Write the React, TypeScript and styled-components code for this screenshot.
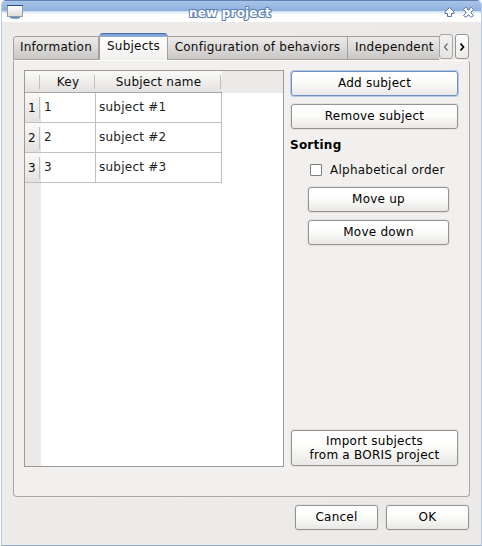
import React from 'react';
import styled, { createGlobalStyle } from 'styled-components';

const GlobalStyle = createGlobalStyle`
  * { box-sizing: border-box; }
  body {
    margin: 0;
    background: #fff;
    overflow: hidden;
    font: 12px/14px "DejaVu Sans", sans-serif;
    letter-spacing: 0.24px;
    color: #0c0c0c;
  }
`;

const Window = styled.div`
  width: 481px;
  height: 546px;
  margin-left: 1px;
  display: flex;
  flex-direction: column;
  border: solid #b9cbe6;
  border-width: 0 1px 1px;
  border-bottom-color: #94a6c8;
  border-radius: 5px 5px 0 0;
  background: linear-gradient(90deg, #edecea, #ebeae8);
  overflow: hidden;
`;

const TitleBar = styled.header`
  height: 22px;
  flex: none;
  display: grid;
  grid-template-columns: 38px 1fr 38px;
  background: linear-gradient(#5d82b5 0 1px, #a9c4e8 1px, #8eb0dd 11px, #c4d8f2 11px, #fff 14px);
`;

const TitleIcon = styled.svg`
  width: 18px;
  height: 16px;
  margin: 4px 0 0 4px;
`;

const TitleText = styled.svg`
  width: 100%;
  height: 22px;
  font: bold 12px "DejaVu Sans", sans-serif;
`;

const Controls = styled.svg`
  width: 38px;
  height: 22px;
`;

const TabBar = styled.nav`
  height: 27px;
  flex: none;
  display: flex;
  align-items: flex-end;
  margin: 11px 11px 0;
`;

const Tab = styled.div<{ $width: number; $selected?: boolean; $first?: boolean; $clipped?: boolean }>`
  width: ${p => p.$width}px;
  height: ${p => (p.$selected ? 27 : 24)}px;
  padding: ${p => (p.$selected ? 5 : 3)}px 0 0 ${p => (p.$clipped ? 7 : 0)}px;
  flex: none;
  text-align: ${p => (p.$clipped ? 'left' : 'center')};
  white-space: nowrap;
  border: 1px solid #a3a19f;
  border-top-color: ${p => (p.$selected ? '#4b72a8' : '#a3a19f')};
  border-left-width: ${p => (p.$first || p.$selected ? 1 : 0)}px;
  border-right-width: ${p => (p.$clipped ? 0 : 1)}px;
  border-bottom-width: ${p => (p.$selected ? 0 : 1)}px;
  border-radius: ${p => (p.$selected ? '4px 4px 0 0' : p.$first ? '3px 0 0 0' : '0')};
  background: ${p => (p.$selected
    ? 'linear-gradient(#769bd0 0, #8fb2e2 3px, #fff 3px, #f1f0ee 100%)'
    : 'linear-gradient(#ecebea, #dddcda 45%, #c9c7c5)')};
`;

const ScrollButton = styled.button<{ $enabled?: boolean }>`
  width: 14px;
  height: 25px;
  margin: 0 ${p => (p.$enabled ? 0 : 2)}px 1px 0;
  padding: 0;
  flex: none;
  border: 1px solid ${p => (p.$enabled ? '#989694' : '#aaa8a6')};
  border-radius: 3px;
  background: ${p => (p.$enabled ? 'linear-gradient(#fff, #eae9e7)' : 'linear-gradient(#f2f1ef, #e5e4e2)')};
  color: ${p => (p.$enabled ? '#000' : '#6c6b6a')};
  svg { display: block; margin: auto; }
`;

const Panel = styled.main`
  width: 457px;
  height: 437px;
  flex: none;
  margin-left: 11px;
  padding: 9px 11px 0 10px;
  display: flex;
  justify-content: space-between;
  border: 1px solid #a9a8a6;
  border-top-color: #fff;
  border-radius: 0 4px 4px 4px;
  background: #f1f0ee;
`;

const TableFrame = styled.section`
  width: 260px;
  height: 397px;
  border: 1px solid #9b9a98;
  background: linear-gradient(90deg, #ebeae8 16px, #fff 16px);
`;

const HeaderRow = styled.div`
  display: flex;
  height: 22px;
  background: #ebeae8;
`;

const HeaderCell = styled.div<{ $width: number }>`
  width: ${p => p.$width}px;
  height: 22px;
  padding: 4px 1px 0 0;
  text-align: center;
  border-bottom: 1px solid #aaa6a3;
  background:
    linear-gradient(#c1c0be, #c1c0be) right 1px top 4px / 1px 14px no-repeat,
    linear-gradient(#fafaf9, #e4e2e0);
`;

const Row = styled.div`
  display: flex;
  height: 30px;
`;

const RowHeader = styled.div`
  width: 16px;
  padding: 8px 0 0 3px;
  border-bottom: 1px solid #c0bfbd;
  background:
    linear-gradient(#c1c0be, #c1c0be) right 1px top 4px / 1px 22px no-repeat,
    linear-gradient(#faf9f8, #e3e2e0);
`;

const Cell = styled.div<{ $width: number }>`
  width: ${p => p.$width}px;
  padding: 7px 0 0 3px;
  border: solid #c0c0c0;
  border-width: 0 1px 1px 0;
  color: #222;
  background: #fff;
`;

const SideColumn = styled.aside`
  width: 167px;
  height: 397px;
  padding: 1px 0;
  display: flex;
  flex-direction: column;
  align-items: center;
`;

const Button = styled.button<{ $width: number; $tall?: boolean; $focused?: boolean }>`
  width: ${p => p.$width}px;
  height: ${p => (p.$tall ? 36 : 25)}px;
  flex: none;
  padding: 0 0 ${p => (p.$tall ? 0 : 1)}px;
  border: 1px solid ${p => (p.$focused ? '#6f91bf' : '#969492')};
  border-radius: 3px;
  background: linear-gradient(#fff, #fcfcfb 45%, #e9e8e6);
  box-shadow: 0 0 0 1px ${p => (p.$focused ? '#b2c9e9' : '#e2e1df')};
  font: inherit;
  letter-spacing: inherit;
  color: #000;
  white-space: pre-line;
`;

const ButtonStack = styled.div<{ $indented?: boolean }>`
  display: flex;
  flex-direction: column;
  align-self: flex-start;
  gap: 8px;
  margin-left: ${p => (p.$indented ? 17 : 0)}px;
`;

const SortingTitle = styled.h2`
  align-self: flex-start;
  margin: 9px 0 0 -1px;
  font: bold 12px/14px "DejaVu Sans", sans-serif;
  color: #000;
`;

const CheckLabel = styled.label`
  align-self: flex-start;
  display: flex;
  align-items: center;
  gap: 8px;
  height: 14px;
  margin: 11px 0 10px 19px;
  white-space: nowrap;
`;

const CheckBox = styled.span`
  width: 12px;
  height: 12px;
  border: 1px solid #7d7c79;
  border-radius: 1px;
  background: #fff;
`;

const ImportSlot = styled.div`
  margin-top: auto;
`;

const Footer = styled.footer`
  display: flex;
  justify-content: flex-end;
  gap: 8px;
  padding: 8px 12px 0 0;
`;

const subjects = [
  { key: '1', name: 'subject #1' },
  { key: '2', name: 'subject #2' },
  { key: '3', name: 'subject #3' },
];

function ArrowControls() {
  return (
    <Controls viewBox="0 0 38 22" fill="#fff" stroke="#5377a9" strokeLinejoin="round">
      <path d="M6.5 7.5l4.5 4.5v1.5H8.5v3h-4v-3H2V12z" />
      <path d="M20.5 9.5l2-2h1l1.5 2.5h1l1.5-2.5h1l2 2-2.5 2.5v1l2.5 2.5-2 1.500h-1l-1.500-2h-1l-1.500 2h-1l-2-1.500 2.500-2.500v-1z" />
    </Controls>
  );
}

export default function App() {
  return (
    <>
      <GlobalStyle />
      <Window>
        <TitleBar>
          <TitleIcon viewBox="0 0 18 16">
            <defs>
              <linearGradient id="screen" x2="0" y2="1">
                <stop stopColor="#fff" />
                <stop offset="1" stopColor="#deddd8" />
              </linearGradient>
            </defs>
            <ellipse cx="9" cy="13.3" rx="5" ry="1.8" fill="#89aada" />
            <rect x="1.5" y="1.5" width="15" height="11" fill="url(#screen)" stroke="#909da9" />
            <path d="M1 1.5h16" stroke="#234f84" />
            <path d="M4 13.5h10" stroke="#5a87c3" />
          </TitleIcon>
          <TitleText>
            <text x="190" y="16.5" textAnchor="middle" textLength="82" fill="#fff" stroke="#5b80b2" strokeWidth="2.2" strokeLinejoin="round" paintOrder="stroke">new project</text>
          </TitleText>
          <ArrowControls />
        </TitleBar>
        <TabBar>
          <Tab $width={86} $first>Information</Tab>
          <Tab $width={69} $selected>Subjects</Tab>
          <Tab $width={180}>Configuration of behaviors</Tab>
          <Tab $width={91} $clipped>Independent</Tab>
          <ScrollButton>
            <svg width="6" height="10" viewBox="0 0 6 10" fill="none" stroke="currentColor" strokeWidth="1.2"><path d="M4.5 1.500L1.500 5l3 3.500" /></svg>
          </ScrollButton>
          <ScrollButton $enabled>
            <svg width="6" height="10" viewBox="0 0 6 10" fill="none" stroke="currentColor" strokeWidth="1.7"><path d="M1.500 1.500l3 3.500-3 3.500" /></svg>
          </ScrollButton>
        </TabBar>
        <Panel>
          <TableFrame>
            <HeaderRow>
              <HeaderCell $width={16} />
              <HeaderCell $width={55}>Key</HeaderCell>
              <HeaderCell $width={126}>Subject name</HeaderCell>
            </HeaderRow>
            {subjects.map(s => (
              <Row key={s.key}>
                <RowHeader>{s.key}</RowHeader>
                <Cell $width={55}>{s.key}</Cell>
                <Cell $width={126}>{s.name}</Cell>
              </Row>
            ))}
          </TableFrame>
          <SideColumn>
            <ButtonStack>
              <Button $width={167} $focused>Add subject</Button>
              <Button $width={167}>Remove subject</Button>
            </ButtonStack>
            <SortingTitle>Sorting</SortingTitle>
            <CheckLabel><CheckBox />Alphabetical order</CheckLabel>
            <ButtonStack $indented>
              <Button $width={141}>Move up</Button>
              <Button $width={141}>Move down</Button>
            </ButtonStack>
            <ImportSlot>
              <Button $width={167} $tall>{'Import subjects\nfrom a BORIS project'}</Button>
            </ImportSlot>
          </SideColumn>
        </Panel>
        <Footer>
          <Button $width={83}>Cancel</Button>
          <Button $width={83}>OK</Button>
        </Footer>
      </Window>
    </>
  );
}
